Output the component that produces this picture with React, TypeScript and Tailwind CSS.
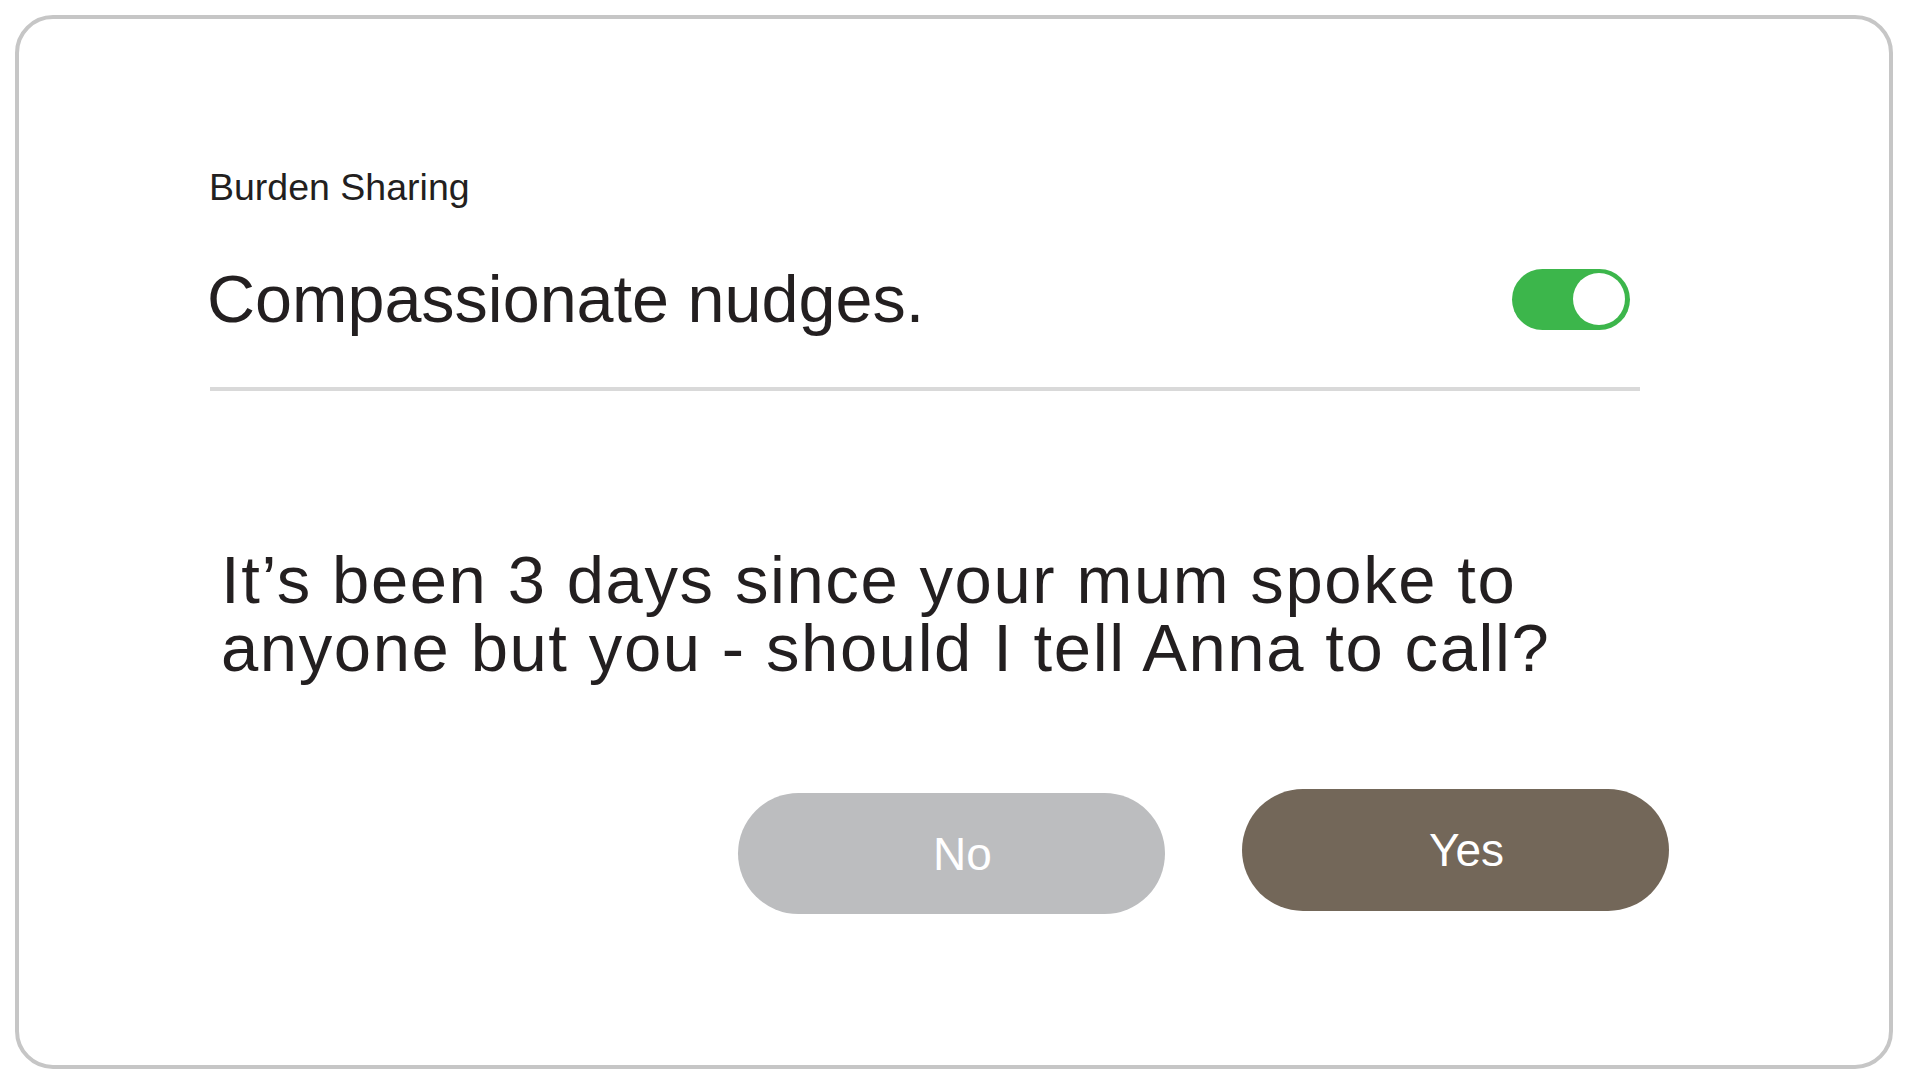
import React from "react";

export default function App() {
  return (
    <div className="w-[1906px] h-[1080px] bg-white pl-[15px] pt-[15px] font-['Liberation_Sans',Arial,sans-serif] text-[#231f20]">
      <div className="w-[1878px] h-[1054px] border-4 border-[#c6c6c6] rounded-[38px] pl-[187px] pt-[150px] flex flex-col">
        <div className="ml-[3px] text-[37.5px] leading-[37px]">Burden Sharing</div>

        <div className="mt-[59px] w-[1424px] flex items-center justify-between">
          <div className="ml-[1px] text-[66.5px] leading-[68px]">Compassionate nudges.</div>
          <div className="relative w-[118px] h-[61px] rounded-full bg-[#3cb64b]">
            <div className="absolute right-[5px] top-[4.5px] w-[52px] h-[52px] rounded-full bg-white" />
          </div>
        </div>

        <div className="mt-[54px] ml-[4px] w-[1430px] h-[4px] bg-[#d9d9d9]" />

        <div className="mt-[155px] ml-[15px] text-[67px] leading-[68px] tracking-[1.6px]">
          <div>It’s been 3 days since your mum spoke to</div>
          <div>anyone but you - should I tell Anna to call?</div>
        </div>

        <div className="mt-[107px] ml-[532px] flex items-start gap-[77px]">
          <button className="mt-[4px] w-[427px] h-[121px] rounded-full bg-[#bcbdbf] text-white text-[46px] leading-[46px] flex items-center justify-center pl-[22px]">
            No
          </button>
          <button className="w-[427px] h-[122px] rounded-full bg-[#736759] text-white text-[46px] leading-[46px] flex items-center justify-center pl-[22px]">
            Yes
          </button>
        </div>
      </div>
    </div>
  );
}
